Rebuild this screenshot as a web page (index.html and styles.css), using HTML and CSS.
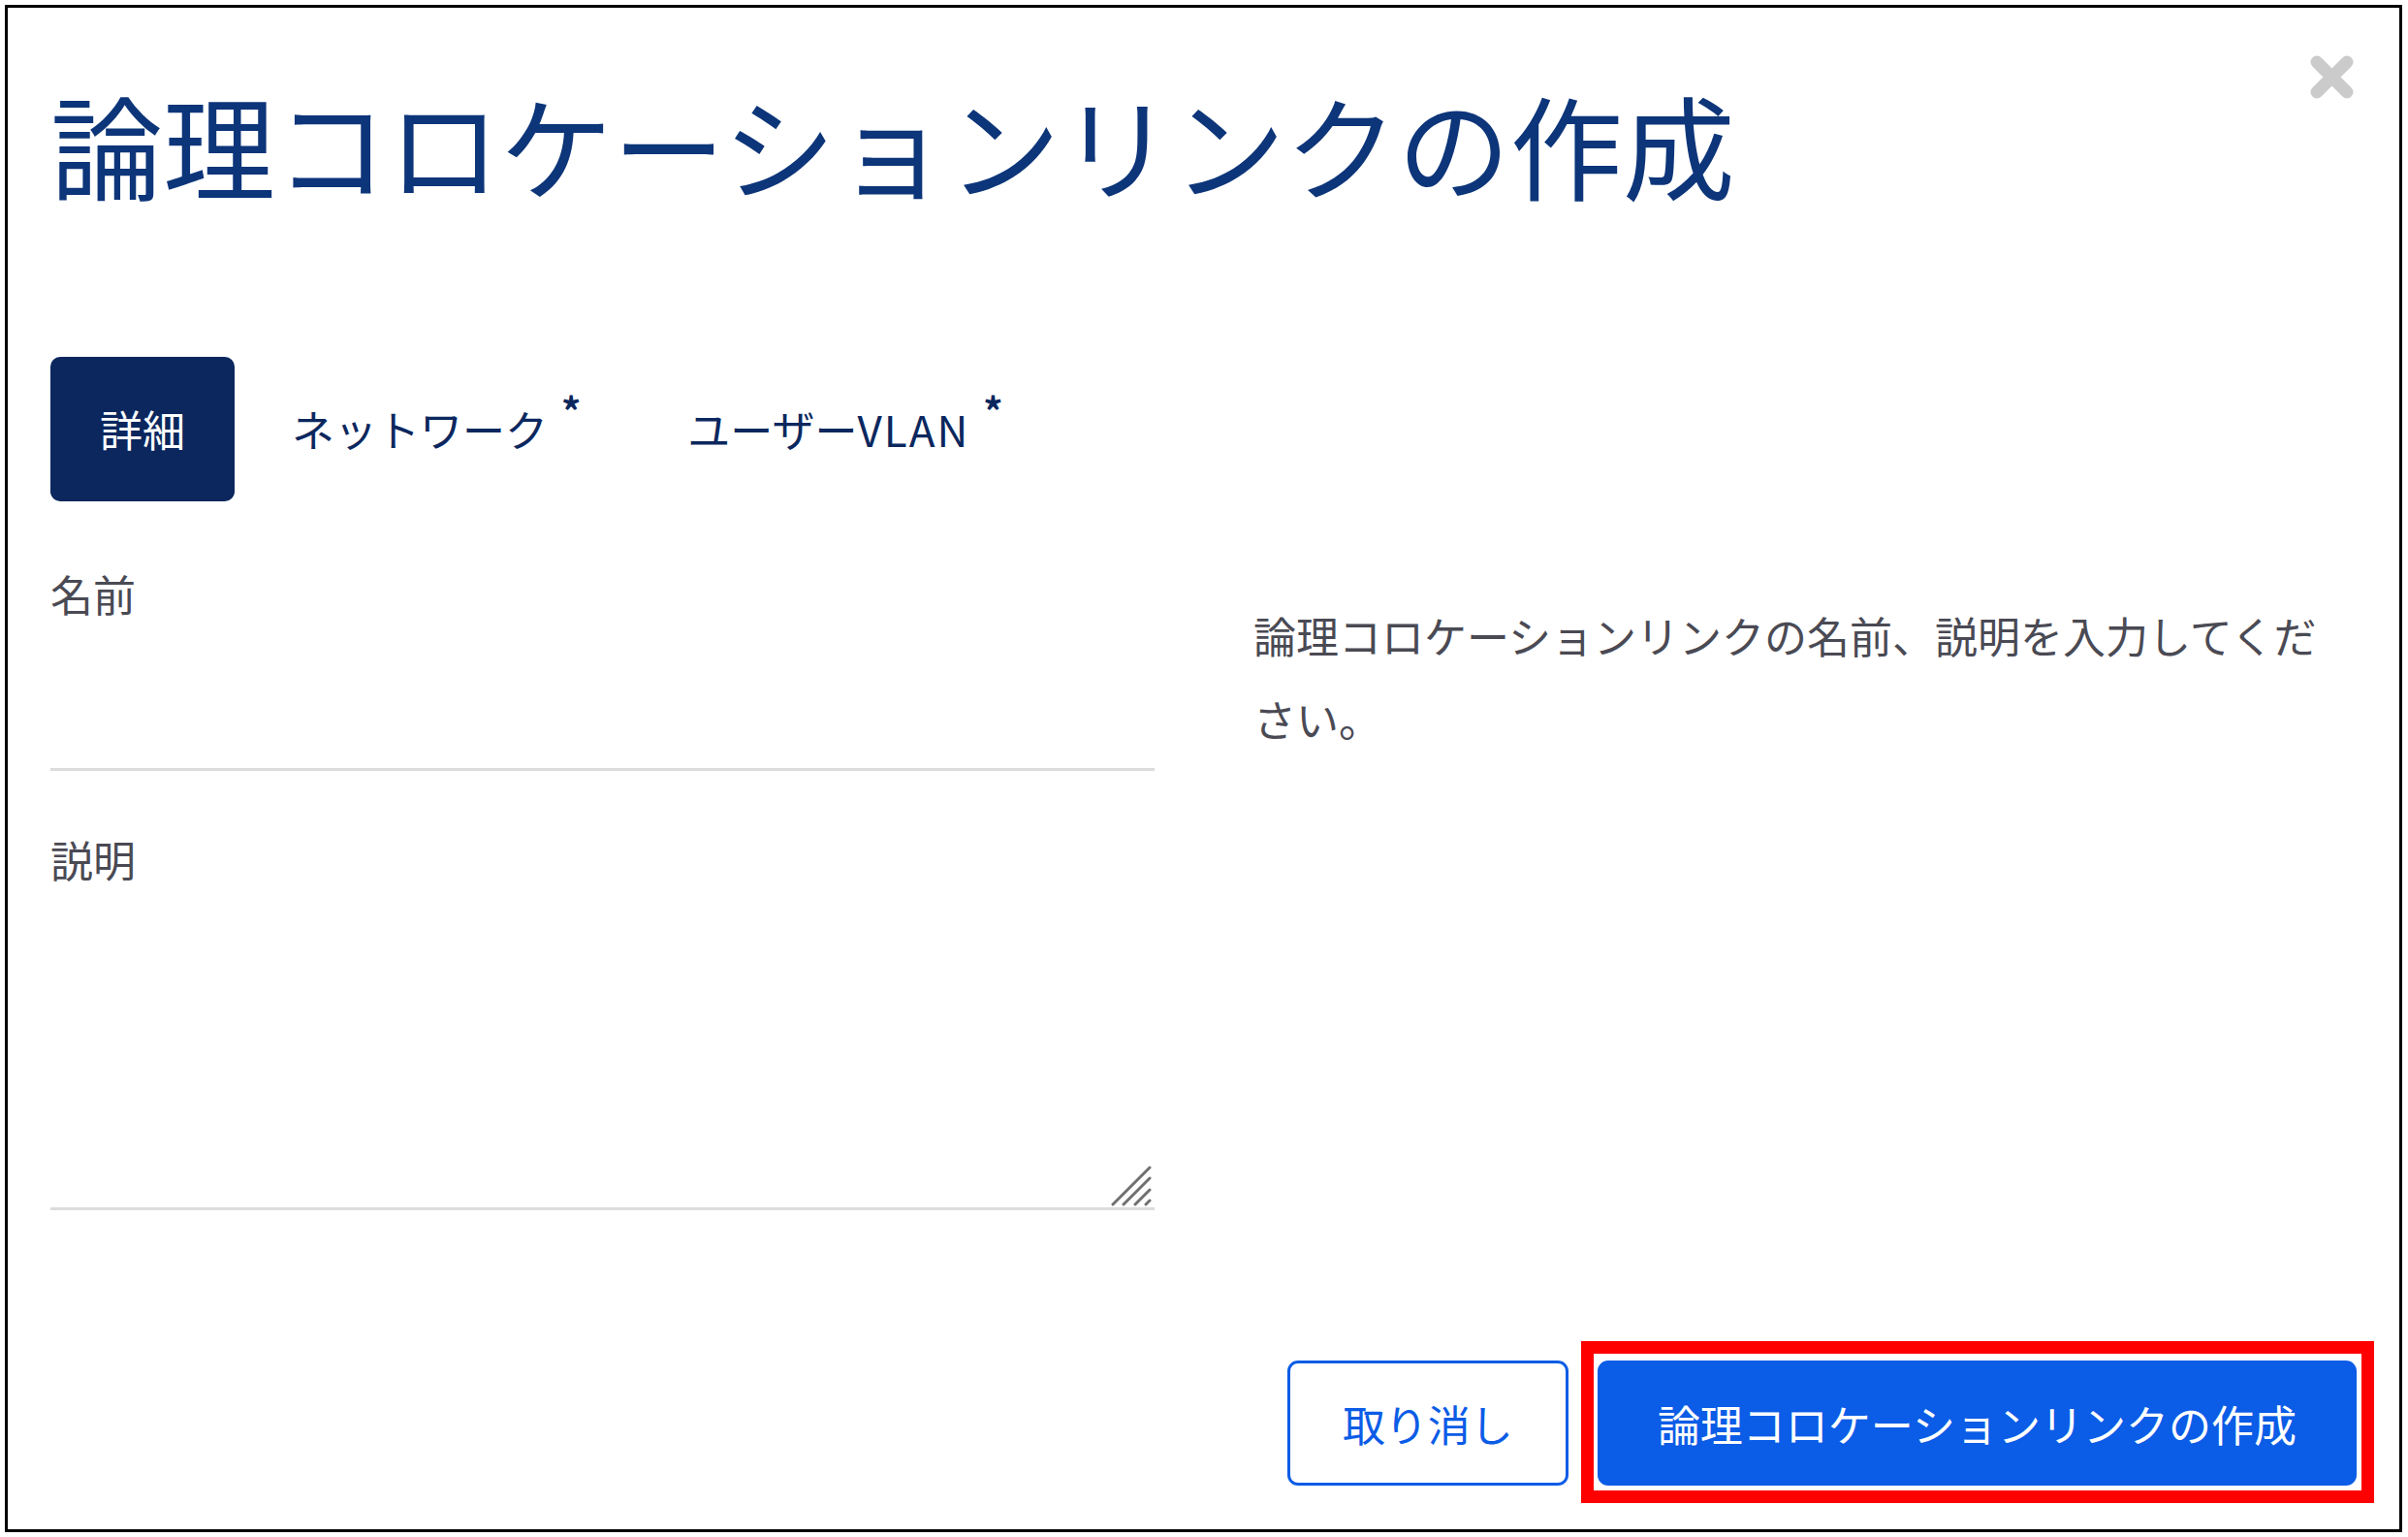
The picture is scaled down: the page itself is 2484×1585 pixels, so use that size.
FILE: index.html
```html
<!DOCTYPE html>
<html lang="ja">
<head>
<meta charset="utf-8">
<title>論理コロケーションリンクの作成</title>
<link rel="stylesheet" href="styles.css">
</head>
<body>
<div class="frame">
  <button class="close" aria-label="閉じる">
    <svg width="45" height="45" viewBox="0 0 45 45"><path d="M7 7 L38 38 M38 7 L7 38" stroke="#cbcbcb" stroke-width="13" stroke-linecap="round"/></svg>
  </button>
  <h1 class="title">論理コロケーションリンクの作成</h1>
  <nav class="tabs">
    <span class="tab active">詳細</span>
    <span class="tab">ネットワーク<span class="req">*</span></span>
    <span class="tab">ユーザー<span class="latin">VLAN</span><span class="req">*</span></span>
  </nav>
  <div class="body">
    <div class="fields">
      <label class="field"><span class="label">名前</span><input class="input" type="text"></label>
      <label class="field"><span class="label">説明</span><span class="ta-wrap"><textarea class="textarea"></textarea><svg class="grip" width="44" height="44" viewBox="0 0 44 44"><g stroke="#707070" stroke-width="3" stroke-linecap="round"><path d="M4 41 L42 3"/><path d="M15 41 L42 14"/><path d="M27 41 L42 26"/><path d="M38 41 L42 37"/></g></svg></span></label>
    </div>
    <p class="desc">論理コロケーションリンクの名前、説明を入力してください。</p>
  </div>
  <div class="footer">
    <button class="btn btn-outline">取り消し</button>
    <span class="highlight"><button class="btn btn-primary">論理コロケーションリンクの作成</button></span>
  </div>
</div>
</body>
</html>
```
FILE: styles.css
```css
* { box-sizing: border-box; }
body {
  margin: 0;
  background: #fff;
  font-family: "Noto Sans CJK JP", "Noto Sans", sans-serif;
}
.frame {
  position: relative;
  margin: 5px 0 0 5px;
  width: 2473px;
  height: 1575px;
  border: 3px solid #000;
  padding: 81px 44px 45px 44px;
  display: flex;
  flex-direction: column;
}
.close {
  position: absolute;
  top: 49px;
  right: 47px;
  width: 45px;
  height: 45px;
  padding: 0;
  border: 0;
  background: none;
  display: block;
}
.close svg { display: block; }
.title {
  margin: 0;
  font-size: 116px;
  line-height: 116px;
  font-weight: 400;
  color: #0d3579;
  white-space: nowrap;
}
.tabs {
  display: flex;
  gap: 8px;
  margin-top: 163px;
}
.tab {
  display: block;
  height: 149px;
  line-height: 149px;
  padding: 0 51px;
  font-size: 44px;
  color: #0b275e;
  border-radius: 10px;
  white-space: nowrap;
}
.tab.active {
  background: #0b275e;
  color: #fff;
}
.latin { letter-spacing: 2px; }
.req {
  font-size: 40px;
  font-weight: 700;
  line-height: 1;
  vertical-align: 21px;
  margin-left: 14px;
}
.body {
  display: grid;
  grid-template-columns: 1139px 1fr;
  column-gap: 102px;
  margin-top: 63px;
}
.field { display: block; }
.field + .field { margin-top: 59px; }
.label {
  display: block;
  font-size: 44px;
  line-height: 64px;
  color: #4a4a54;
}
.input {
  display: block;
  width: 100%;
  height: 151px;
  border: 0;
  border-bottom: 3px solid #dcdcdc;
  padding: 0;
  font: inherit;
  font-size: 44px;
  outline: none;
  background: transparent;
}
.ta-wrap {
  position: relative;
  display: block;
}
.textarea {
  display: block;
  width: 100%;
  height: 330px;
  border: 0;
  border-bottom: 3px solid #dcdcdc;
  padding: 0;
  resize: none;
  font: inherit;
  font-size: 44px;
  outline: none;
  background: transparent;
}
.grip {
  position: absolute;
  right: 3px;
  bottom: 3px;
  display: block;
}
.desc {
  margin: 32px 0 0;
  font-size: 44px;
  line-height: 86px;
  color: #4a4a54;
}
.footer {
  margin-top: auto;
  display: flex;
  justify-content: flex-end;
  gap: 30px;
}
.btn {
  height: 129px;
  font-family: inherit;
  font-size: 44px;
  line-height: 1;
  border-radius: 11px;
  border: 3px solid #0b5ce6;
  white-space: nowrap;
  cursor: pointer;
}
.btn-outline {
  background: #fff;
  color: #0b5ce6;
  padding: 0 54px;
}
.btn-primary {
  background: #0b5ce6;
  color: #fff;
  padding: 0 59px;
}
.highlight {
  position: relative;
  display: flex;
}
.highlight::after {
  content: "";
  position: absolute;
  top: -20px;
  right: -18px;
  bottom: -18px;
  left: -17px;
  border: 13px solid #ff0000;
  pointer-events: none;
}
```
